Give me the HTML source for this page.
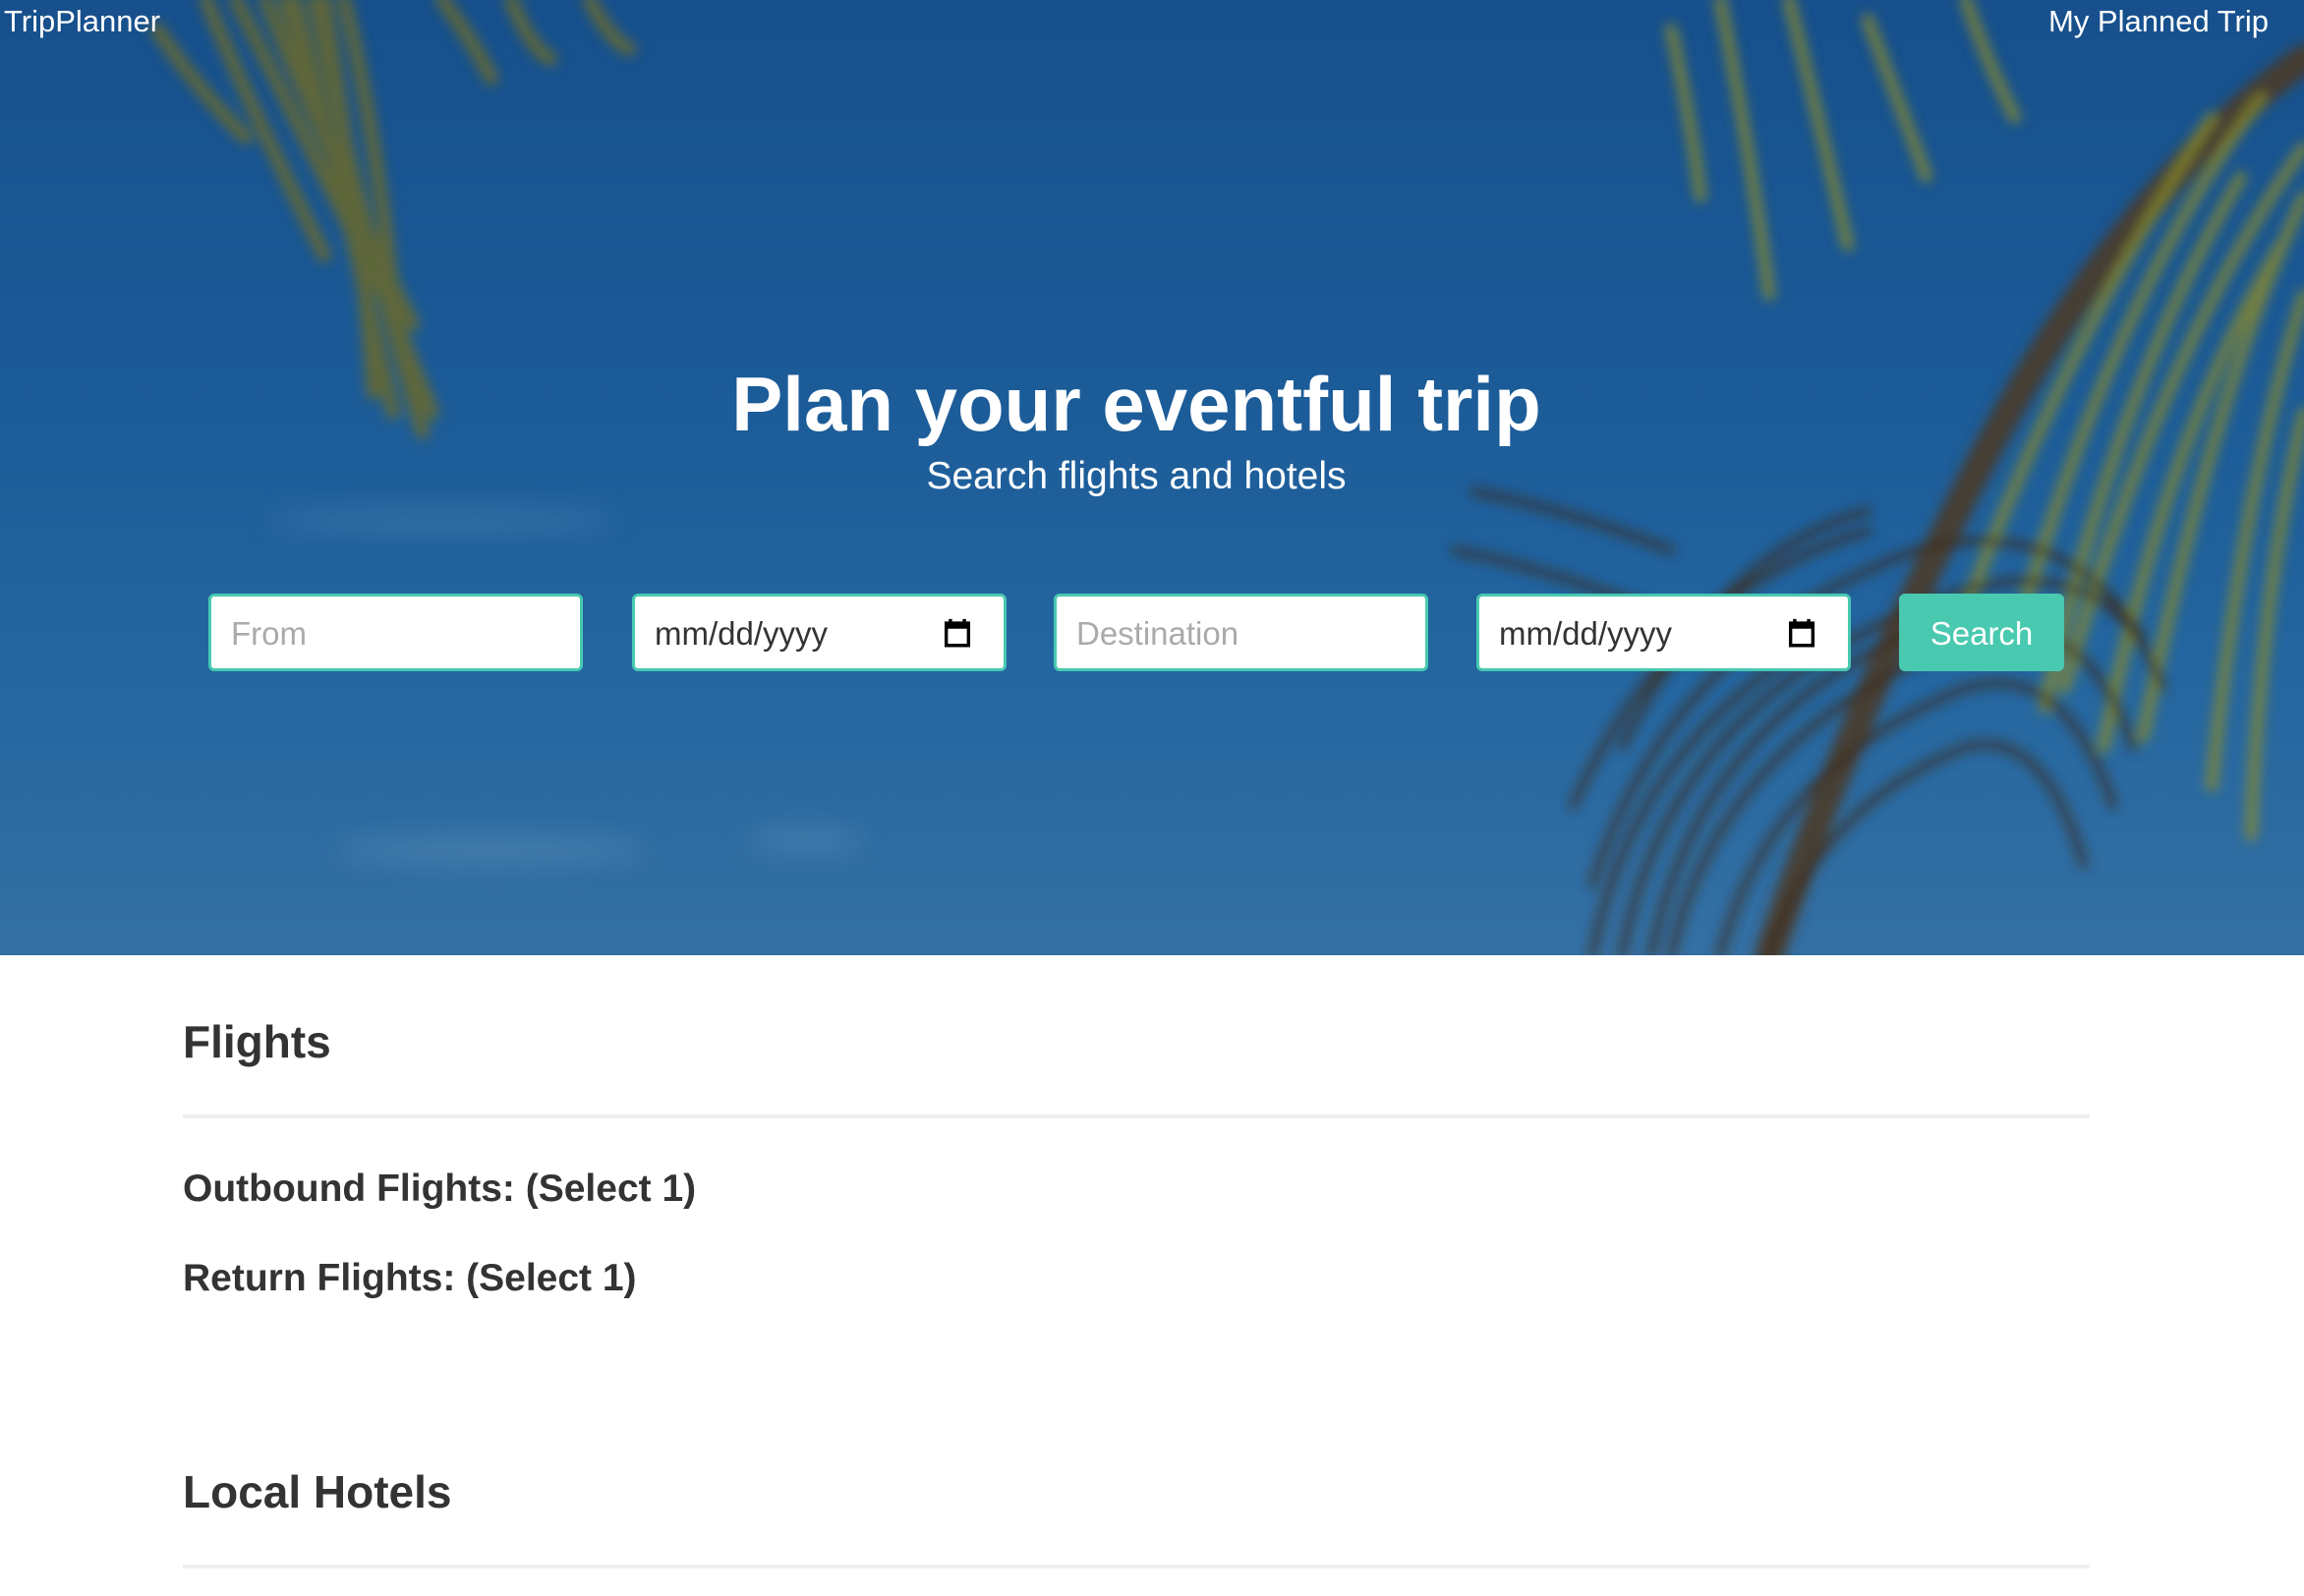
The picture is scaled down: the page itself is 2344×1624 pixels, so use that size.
<!DOCTYPE html>
<html><head><style>
*{margin:0;padding:0;box-sizing:border-box}
body{width:2344px;height:1624px;overflow:hidden;background:#fff;font-family:"Liberation Sans",sans-serif;position:relative}
.hero{position:absolute;left:0;top:0;width:2344px;height:972px;background:linear-gradient(180deg,#17508c 0%,#1b5b98 40%,#2466a0 70%,#3470a3 100%);overflow:hidden}
.abs{position:absolute;white-space:nowrap}
.inp{position:absolute;top:604px;height:79px;width:381px;background:#fff;border:3px solid #48c9b0;border-radius:6px;font-size:33px;line-height:75px;padding-left:20px;color:#333}
.ph{color:#aaa}
.cal{position:absolute;right:30px;top:20px}
.btn{position:absolute;left:1932px;top:604px;width:168px;height:79px;background:#48c9b0;border-radius:6px;color:#fff;font-size:33px;line-height:81px;text-align:center}
.hd{position:absolute;left:186px;color:#333;font-weight:bold;white-space:nowrap}
.hr{position:absolute;left:186px;width:1940px;height:4px;background:#efefef}
</style></head><body>
<div class="hero">
<svg width="2344" height="972" style="position:absolute;left:0;top:0">
<defs><filter id="b"><feGaussianBlur stdDeviation="6"/></filter><filter id="b2"><feGaussianBlur stdDeviation="14"/></filter></defs>
<g filter="url(#b)" stroke-linecap="round" fill="none">
<g stroke="#6b6a2a" stroke-width="14" opacity="0.85">
<path d="M240 0 Q300 120 390 300"/><path d="M270 0 Q330 150 420 330"/><path d="M300 0 Q340 160 400 420"/><path d="M320 0 Q360 200 430 440"/><path d="M210 0 Q250 100 330 260"/><path d="M350 0 Q380 120 400 300"/><path d="M160 30 Q200 90 250 140"/><path d="M290 0 Q350 200 440 420"/><path d="M330 0 Q370 250 380 400"/>
<path d="M450 0 Q480 40 500 80"/><path d="M520 0 Q540 50 560 60"/><path d="M600 0 Q620 40 640 50"/>
</g>
<g stroke="#4a3a28" stroke-width="30" opacity="0.9">
<path d="M2344 60 Q2150 200 2000 500 Q1870 760 1800 972"/>
</g>
<g stroke="#8a8a2a" stroke-width="12" opacity="0.8">
<path d="M2344 150 Q2200 350 2100 700"/><path d="M2344 200 Q2250 400 2180 750"/><path d="M2300 100 Q2150 300 2050 650"/><path d="M2344 300 Q2280 500 2250 800"/><path d="M2250 120 Q2100 350 2000 620"/><path d="M2344 420 Q2300 600 2290 850"/><path d="M2320 250 Q2200 450 2140 760"/><path d="M2280 180 Q2150 400 2080 720"/>
<path d="M1750 0 Q1780 150 1800 300"/><path d="M1820 0 Q1850 120 1880 250"/><path d="M1700 30 Q1720 120 1730 200"/><path d="M1900 20 Q1930 100 1960 180"/><path d="M2000 0 Q2020 60 2050 120"/>
</g>
<g stroke="#3d2a1c" stroke-width="7" opacity="0.85">
<path d="M1650 972 Q1700 700 2000 600 Q2150 560 2200 700"/><path d="M1700 972 Q1750 750 2000 650 Q2120 610 2170 760"/><path d="M1750 972 Q1800 780 2000 700 Q2100 670 2150 820"/><path d="M1620 900 Q1700 650 1950 560 Q2100 520 2180 650"/><path d="M1800 972 Q1850 820 2000 760 Q2080 740 2120 880"/><path d="M1600 820 Q1700 600 1900 540"/><path d="M1650 760 Q1750 560 1900 520"/><path d="M1680 972 Q1730 720 1980 630"/><path d="M1620 972 Q1660 760 1850 650"/>
<path d="M1500 500 Q1600 520 1700 560"/><path d="M1480 560 Q1580 580 1680 620"/>
</g>
</g>
<g filter="url(#b2)" fill="#7fa6c8" opacity="0.35"><ellipse cx="450" cy="530" rx="180" ry="8"/><ellipse cx="500" cy="865" rx="160" ry="12"/><ellipse cx="820" cy="855" rx="60" ry="10"/></g>
</svg>
<div class="abs" style="left:4px;top:4px;color:#fff;font-size:31px">TripPlanner</div>
<div class="abs" style="right:36px;top:4px;color:#fff;font-size:31px">My Planned Trip</div>
<div class="abs" style="left:0;width:2312px;text-align:center;top:366px;color:#fff;font-size:78px;font-weight:bold">Plan your eventful trip</div>
<div class="abs" style="left:0;width:2312px;text-align:center;top:463px;color:#fff;font-size:39px">Search flights and hotels</div>
<div class="inp ph" style="left:212px">From</div>
<div class="inp" style="left:643px">mm/dd/yyyy<svg class="cal" width="34" height="34" viewBox="0 0 24 24"><path d="M4 5h16v16H4z" fill="none" stroke="#000" stroke-width="2.4"/><path d="M4 5h16v4H4z" fill="#000"/><path d="M7 2v4M17 2v4" stroke="#000" stroke-width="2.4"/></svg></div>
<div class="inp ph" style="left:1072px">Destination</div>
<div class="inp" style="left:1502px">mm/dd/yyyy<svg class="cal" width="34" height="34" viewBox="0 0 24 24"><path d="M4 5h16v16H4z" fill="none" stroke="#000" stroke-width="2.4"/><path d="M4 5h16v4H4z" fill="#000"/><path d="M7 2v4M17 2v4" stroke="#000" stroke-width="2.4"/></svg></div>
<div class="btn">Search</div>
</div>
<div class="hd" style="top:1033px;font-size:46px">Flights</div>
<div class="hr" style="top:1134px"></div>
<div class="hd" style="top:1188px;font-size:39px">Outbound Flights: (Select 1)</div>
<div class="hd" style="top:1279px;font-size:39px">Return Flights: (Select 1)</div>
<div class="hd" style="top:1491px;font-size:46px">Local Hotels</div>
<div class="hr" style="top:1592px"></div>
</body></html>
